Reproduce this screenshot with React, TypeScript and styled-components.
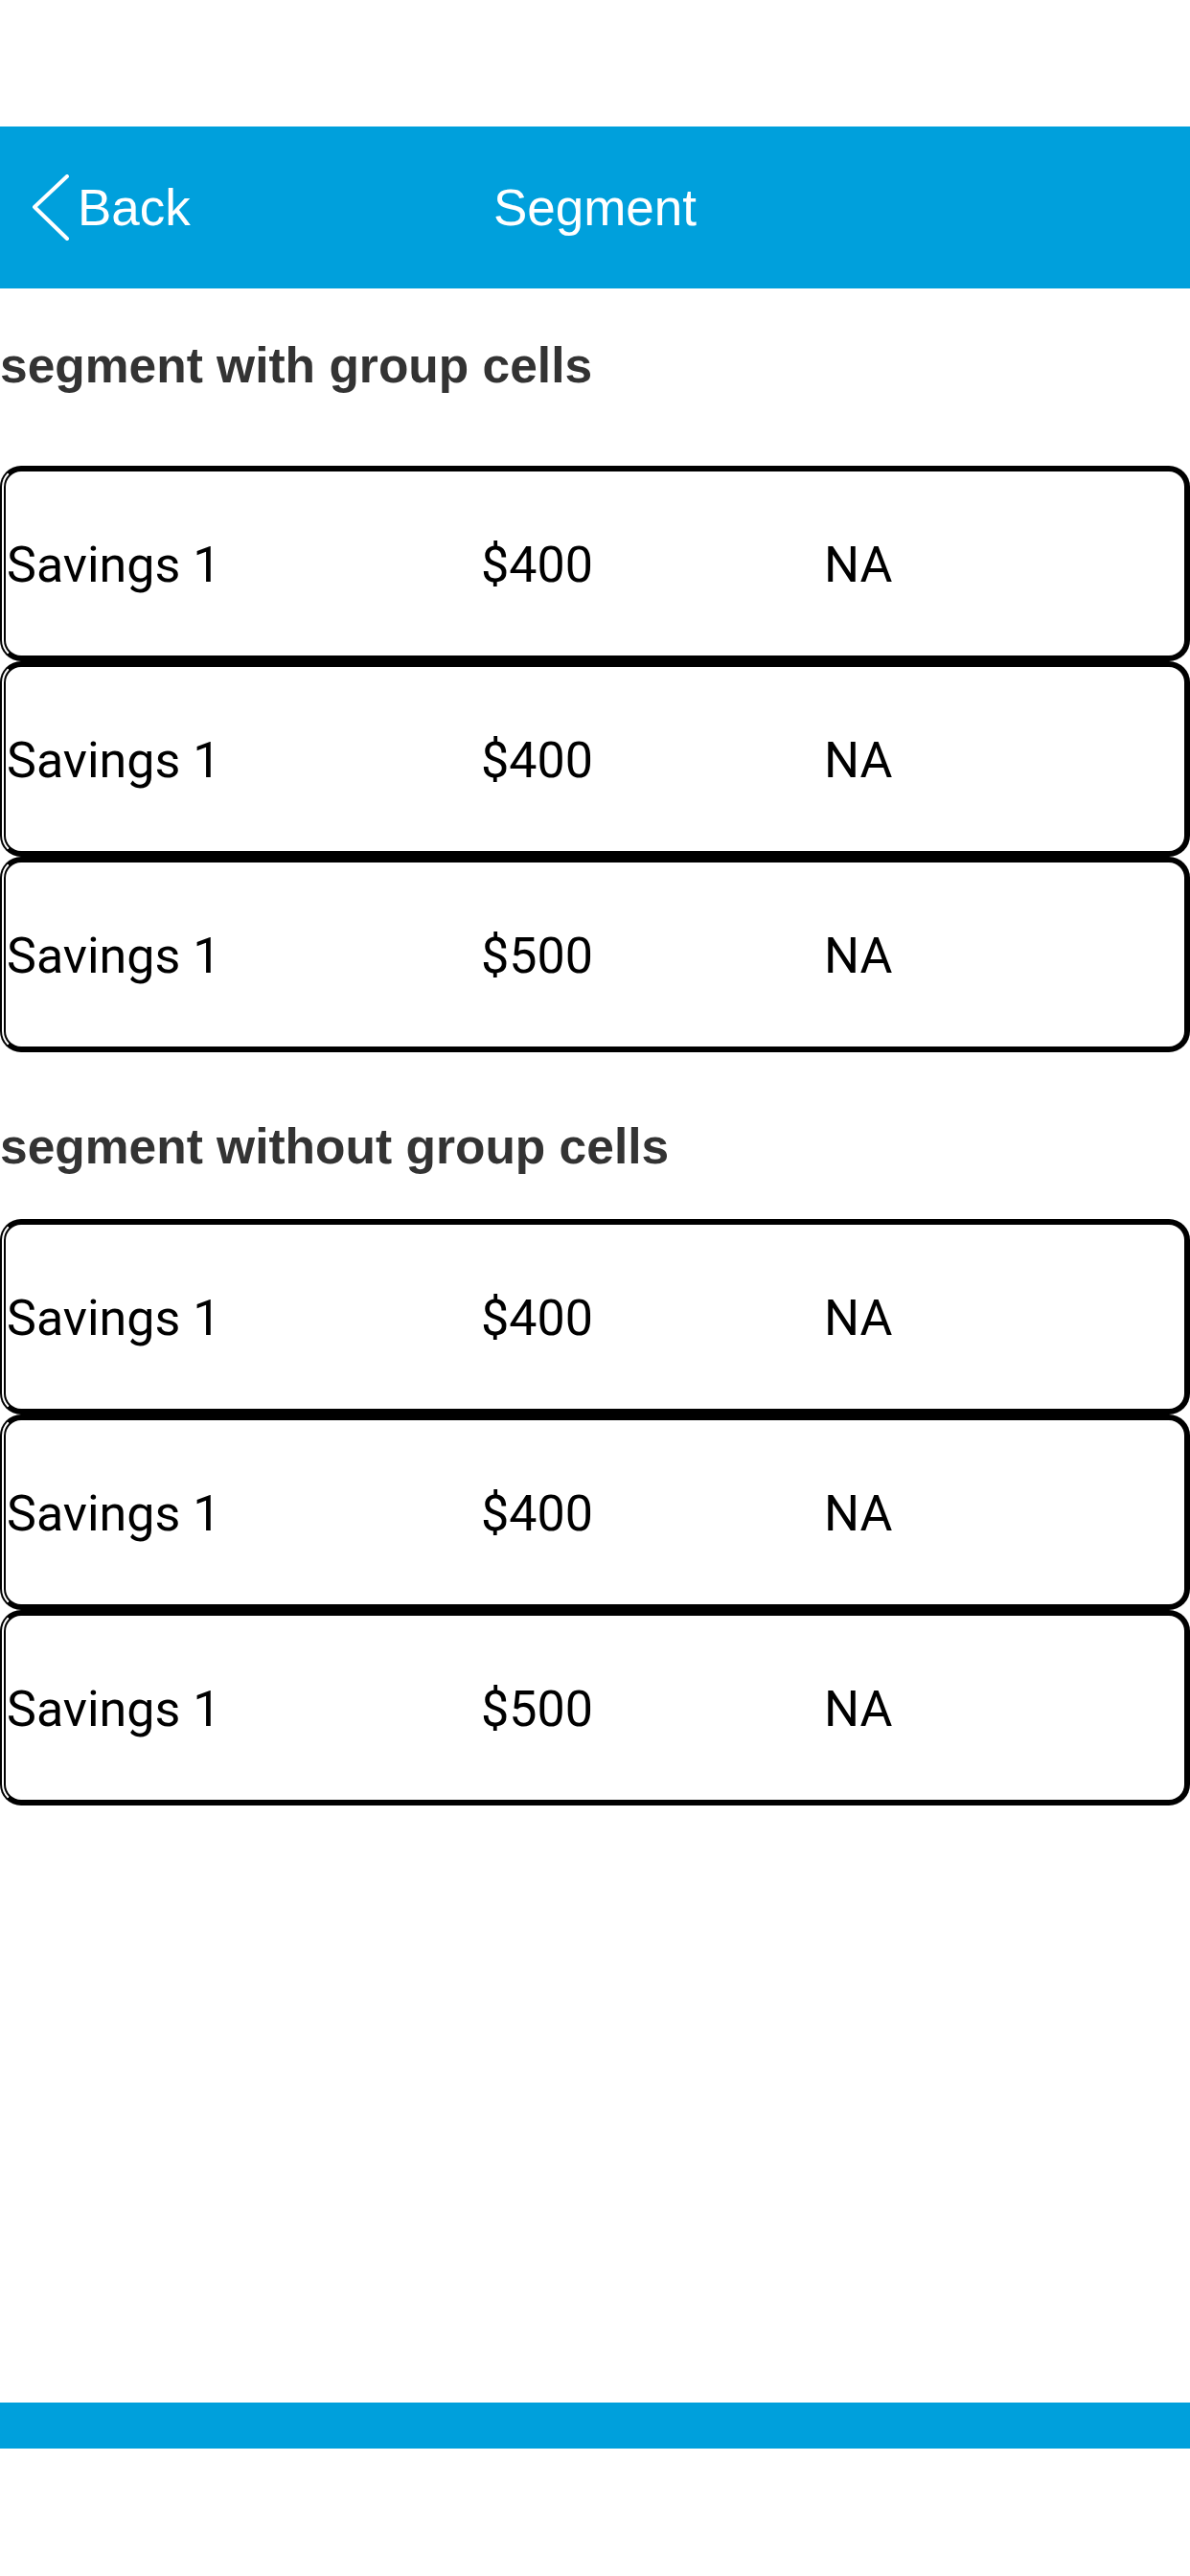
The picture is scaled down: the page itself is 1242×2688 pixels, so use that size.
import React from "react";
import styled, { createGlobalStyle } from "styled-components";

const GlobalStyle = createGlobalStyle`
  html, body {
    margin: 0;
    padding: 0;
    background: #ffffff;
  }
  body {
    font-family: "Liberation Sans", Arial, sans-serif;
  }
  * { box-sizing: border-box; }
`;

const BLUE = "#00A0DC";

const Page = styled.div`
  width: 1242px;
  min-height: 2688px;
  display: flex;
  flex-direction: column;
  background: #fff;
`;

const StatusSpace = styled.div`
  height: 132px;
`;

const NavBar = styled.header`
  height: 169px;
  background: ${BLUE};
  display: grid;
  grid-template-columns: 1fr auto 1fr;
  align-items: center;
  color: #fff;
`;

const BackButton = styled.button`
  justify-self: start;
  display: flex;
  align-items: center;
  gap: 8px;
  margin-left: 33px;
  padding: 0;
  border: none;
  background: transparent;
  color: #fff;
  font-family: "Liberation Sans", Arial, sans-serif;
  font-size: 53px;
  line-height: 60px;
  cursor: pointer;
`;

const Title = styled.h1`
  margin: 0;
  font-family: "Liberation Sans", Arial, sans-serif;
  font-weight: 400;
  font-size: 53px;
  line-height: 60px;
  color: #fff;
`;

const SectionTitle = styled.h2<{ $top: number; $bottom: number }>`
  margin: ${(p) => p.$top}px 0 ${(p) => p.$bottom}px 0;
  font-family: "Liberation Sans", Arial, sans-serif;
  font-weight: 700;
  font-size: 51.5px;
  line-height: 60px;
  color: #333333;
`;

const RowList = styled.div`
  display: flex;
  flex-direction: column;
`;

const Row = styled.div`
  height: 204px;
  border: 6px solid #000;
  border-left-style: double;
  border-radius: 22px;
  display: grid;
  grid-template-columns: 495px 358px 1fr;
  align-items: center;
  padding: 3px 0 0 1px;
  font-family: Roboto, "Liberation Sans", sans-serif;
  font-size: 52px;
  color: #000;
  background: #fff;
`;

const Cell = styled.span`
  white-space: nowrap;
`;

const Spacer = styled.div`
  flex: 1;
`;

const BottomBar = styled.div`
  height: 48px;
  background: ${BLUE};
  margin-bottom: 133px;
`;

const ChevronLeft = () => (
  <svg width="40" height="70" viewBox="0 0 40 70" aria-hidden="true">
    <polyline
      points="37,2 3,34 37,67"
      fill="none"
      stroke="#fff"
      strokeWidth="4"
      strokeLinecap="round"
      strokeLinejoin="round"
    />
  </svg>
);

type Item = { name: string; amount: string; status: string };

const items: Item[] = [
  { name: "Savings 1", amount: "$400", status: "NA" },
  { name: "Savings 1", amount: "$400", status: "NA" },
  { name: "Savings 1", amount: "$500", status: "NA" },
];

const Rows = () => (
  <RowList>
    {items.map((it, i) => (
      <Row key={i}>
        <Cell>{it.name}</Cell>
        <Cell>{it.amount}</Cell>
        <Cell>{it.status}</Cell>
      </Row>
    ))}
  </RowList>
);

export default function App() {
  return (
    <Page>
      <GlobalStyle />
      <StatusSpace />
      <NavBar>
        <BackButton>
          <ChevronLeft />
          Back
        </BackButton>
        <Title>Segment</Title>
        <div />
      </NavBar>
      <SectionTitle $top={50} $bottom={75}>segment with group cells</SectionTitle>
      <Rows />
      <SectionTitle $top={68} $bottom={46}>segment without group cells</SectionTitle>
      <Rows />
      <Spacer />
      <BottomBar />
    </Page>
  );
}
